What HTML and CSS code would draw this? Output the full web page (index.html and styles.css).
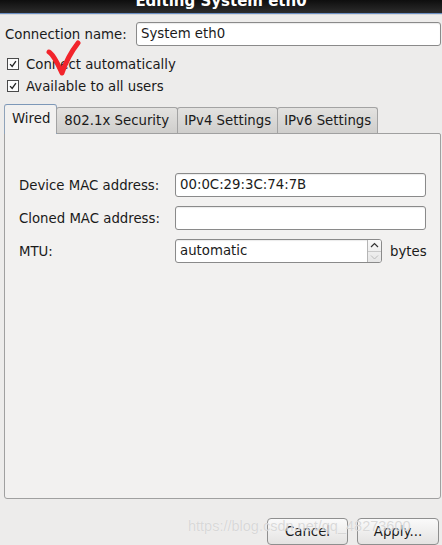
FILE: index.html
```html
<!DOCTYPE html>
<html>
<head>
<meta charset="utf-8">
<link rel="stylesheet" href="styles.css">
</head>
<body>
<div class="window">
  <div class="titlebar"><span class="title">Editing System eth0</span></div>
  <div class="content">
    <div class="name-row">
      <span class="label">Connection name:</span>
      <div class="entry name-entry">System eth0</div>
    </div>
    <div class="checks">
      <div class="check-row"><span class="checkbox"><svg viewBox="0 0 12 12" width="12" height="12"><path d="M2.5 6.2 L5 9 L9.5 2.5" fill="none" stroke="#222" stroke-width="1.6"/></svg></span><span>Connect automatically</span></div>
      <div class="check-row"><span class="checkbox"><svg viewBox="0 0 12 12" width="12" height="12"><path d="M2.5 6.2 L5 9 L9.5 2.5" fill="none" stroke="#222" stroke-width="1.6"/></svg></span><span>Available to all users</span></div>
    </div>
    <div class="tabs">
      <div class="tab active">Wired</div>
      <div class="tab sec">802.1x Security</div>
      <div class="tab">IPv4 Settings</div>
      <div class="tab">IPv6 Settings</div>
    </div>
    <div class="panel">
      <div class="form-row">
        <span class="flabel">Device MAC address:</span>
        <div class="entry wide">00:0C:29:3C:74:7B</div>
      </div>
      <div class="form-row">
        <span class="flabel">Cloned MAC address:</span>
        <div class="entry wide"></div>
      </div>
      <div class="form-row">
        <span class="flabel">MTU:</span>
        <div class="entry spin">
          <span class="spin-text">automatic</span>
          <span class="spin-btns">
            <span class="spin-up"><svg viewBox="0 0 9 6" width="9" height="6"><path d="M1 5 L4.5 1.5 L8 5" fill="none" stroke="#333" stroke-width="1.2"/></svg></span>
            <span class="spin-down"><svg viewBox="0 0 9 6" width="9" height="6"><path d="M1 1.5 L4.5 5 L8 1.5" fill="none" stroke="#bbb" stroke-width="1"/></svg></span>
          </span>
        </div>
        <span class="unit">bytes</span>
      </div>
    </div>
    <div class="buttons">
      <div class="btn cancel">Cancel</div>
      <div class="btn apply">Apply...</div>
    </div>
  </div>
  <svg class="redmark" viewBox="0 0 40 40" width="40" height="40"><path d="M4 12 C8 14 12 22 17 33 C20 24 26 12 33 3" fill="none" stroke="#f2242b" stroke-width="5" stroke-linecap="round" stroke-linejoin="round"/></svg>
  <div class="watermark">https://blog.csdn.net/qq_48273600</div>
</div>
</body>
</html>
```
FILE: styles.css
```css
html, body {
  margin: 0;
  padding: 0;
  background: #edeceb;
}
.window {
  position: relative;
  width: 442px;
  height: 545px;
  overflow: hidden;
  font-family: "DejaVu Sans", sans-serif;
  font-size: 13.3px;
  color: #1a1a1a;
  background: #edeceb;
}
.titlebar {
  height: 13px;
  border-bottom: 1px solid #6b8fc4;
  background: linear-gradient(#0e0e0e, #2c2c2c);
  overflow: hidden;
  text-align: center;
  box-shadow: 0 1px 0 #d8d8d8;
}
.title {
  display: block;
  margin-top: -8px;
  line-height: 18px;
  font-size: 15px;
  font-weight: bold;
  color: #ffffff;
}
.content {
  padding: 8px 1px 0 5px;
}
.name-row {
  display: flex;
  align-items: center;
  height: 24px;
}
.label {
  width: 131px;
}
.entry {
  box-sizing: border-box;
  height: 24px;
  border: 1px solid #8a8a8a;
  border-radius: 3px;
  background: #ffffff;
  padding-left: 4px;
  line-height: 22px;
  box-shadow: inset 0 1px 1px rgba(0,0,0,0.08);
}
.name-entry {
  width: 305px;
}
.checks {
  margin-top: 7px;
}
.check-row {
  display: flex;
  align-items: center;
  height: 22px;
  padding-left: 2px;
}
.checkbox {
  box-sizing: border-box;
  width: 12px;
  height: 12px;
  border: 1px solid #4a4a4a;
  background: #fbfbfb;
  margin-right: 7px;
  display: flex;
  align-items: center;
  justify-content: center;
}
.checkbox svg {
  width: 10px;
  height: 10px;
}
.tabs {
  display: flex;
  align-items: flex-end;
  margin-top: 7px;
  margin-left: -1px;
  height: 29px;
  position: relative;
  z-index: 1;
}
.tab {
  box-sizing: border-box;
  height: 26px;
  padding: 0 6px 0 6px;
  line-height: 26px;
  border: 1px solid #a3a3a3;
  border-bottom: none;
  border-radius: 3px 3px 0 0;
  background: linear-gradient(#e3e2e0, #cfcecc);
  margin-right: -1px;
}
.tab.sec {
  padding: 0 8px 0 7px;
}
.tab.active {
  height: 30px;
  margin-bottom: -1px;
  line-height: 28px;
  background: #f2f1f0;
  border-color: #8fa3ba;
  border-top: 1px solid #7d98b8;
  padding: 0 6px 0 7px;
}
.panel {
  box-sizing: border-box;
  height: 366px;
  margin-left: -1px;
  border: 1px solid #a0a0a0;
  border-radius: 0 2px 3px 3px;
  background: #f2f1f0;
  padding-top: 39px;
  padding-left: 14px;
}
.form-row {
  display: flex;
  align-items: center;
  height: 24px;
  margin-bottom: 9px;
}
.flabel {
  width: 156px;
}
.wide {
  width: 251px;
}
.spin {
  width: 207px;
  display: flex;
  padding-right: 0;
  overflow: hidden;
}
.spin-text {
  flex: 1;
}
.spin-btns {
  width: 13px;
  display: flex;
  flex-direction: column;
  border-left: 1px solid #b5b5b5;
  background: linear-gradient(#f8f8f8, #e6e6e6);
}
.spin-up, .spin-down {
  flex: 1;
  display: flex;
  align-items: center;
  justify-content: center;
}
.spin-up {
  border-bottom: 1px solid #c9c9c9;
}
.unit {
  margin-left: 8px;
}
.buttons {
  display: flex;
  justify-content: flex-end;
  gap: 9px;
  margin-top: 19px;
  padding-right: 2px;
}
.btn {
  box-sizing: border-box;
  height: 27px;
  border: 1px solid #8f8f8f;
  border-radius: 4px;
  background: linear-gradient(#fafafa, #e4e3e2);
  text-align: center;
  line-height: 25px;
}
.cancel { width: 81px; }
.apply { width: 82px; }
.redmark {
  position: absolute;
  left: 45px;
  top: 40px;
}
.watermark {
  position: absolute;
  left: 188px;
  top: 518px;
  font-family: "Liberation Sans", sans-serif;
  font-size: 14.5px;
  color: rgba(205,205,205,0.75);
  text-shadow: 0 0 1px rgba(255,255,255,0.8);
  pointer-events: none;
}
```
